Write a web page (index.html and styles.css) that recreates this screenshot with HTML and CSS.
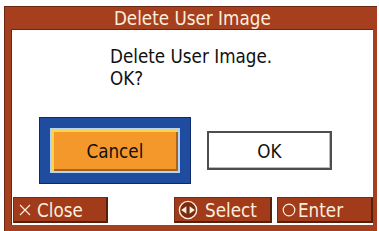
FILE: index.html
```html
<!DOCTYPE html>
<html lang="en">
  <head>
    <meta charset="UTF-8" />
    <meta name="viewport" content="width=device-width, initial-scale=1.0" />
    <title>Delete User Image</title>
    <link rel="stylesheet" href="styles.css">
  </head>
  <body>
    <!-- Delete dialog -->
    <section class="dialog">
      <div class="dialog-title"><span class="txt">Delete User Image</span></div>

      <div class="dialog-body">
        <div class="message">
          <span class="txt">Delete User Image.</span><br />
          <span class="txt">OK?</span>
        </div>

        <div class="choices">
          <div class="focus-box">
            <div class="btn btn-cancel"><span class="txt">Cancel</span></div>
          </div>
          <div class="btn btn-ok"><span class="txt">OK</span></div>
        </div>

        <!-- bottom function buttons -->
        <div class="func-bar">
          <div class="func func-close">
            <svg class="icon-x" viewBox="0 0 12 12">
              <path d="M1 1 L11 11 M11 1 L1 11" />
            </svg>
            <span class="txt">Close</span>
          </div>
          <div class="func func-select">
            <svg class="icon-dial" viewBox="0 0 20 20">
              <circle cx="10" cy="10" r="8.6" />
              <polygon points="3.2,10 8.4,6.2 8.4,13.8" />
              <polygon points="16.8,10 11.6,6.2 11.6,13.8" />
            </svg>
            <span class="txt">Select</span>
          </div>
          <div class="func func-enter">
            <svg class="icon-ring" viewBox="0 0 14 14">
              <circle cx="7" cy="7" r="5.8" />
            </svg>
            <span class="txt">Enter</span>
          </div>
        </div>
      </div>
    </section>
  </body>
</html>
```

FILE: styles.css
```css
:root {
  --frame: #a53f1d;
  --frame-dark: #6a2711;
  --cream: #fdeedd;
  --blue: #1f4c9e;
  --orange: #f5982b;
}

* {
  margin: 0;
  padding: 0;
  box-sizing: border-box;
}

body {
  background: #ffffff;
  font-family: "DejaVu Sans", "Liberation Sans", sans-serif;
  font-size: 20px;
  overflow: hidden;
}

/* narrow, tall lettering like the panel's bitmap font */
.txt {
  display: inline-block;
  transform: scaleX(0.84);
  white-space: nowrap;
}

/* outer frame */
.dialog {
  margin: 6px 0 0 4px;
  width: 373px;
  height: 225px;
  background: var(--frame);
  border-top: 1px solid var(--frame-dark);
  border-left: 1px solid var(--frame-dark);
  padding: 0 4px 0 6px;
}

.dialog-title {
  height: 22px;
  line-height: 22px;
  text-align: center;
  color: var(--cream);
}

.dialog-body {
  background: #ffffff;
  height: 196px;
  border-top: 1px solid var(--frame-dark);
  border-left: 1px solid var(--frame-dark);
  display: flex;
  flex-direction: column;
}

.message {
  padding: 15px 0 0 98px;
  line-height: 22px;
  color: #111;
}

.message .txt {
  transform-origin: left center;
}

.choices {
  display: flex;
  align-items: center;
  gap: 16px;
  margin-top: 28px;
  padding-left: 27px;
}

.focus-box {
  width: 152px;
  height: 67px;
  background: var(--blue);
  border: 1px solid #0d2b6c;
  padding: 10px;
}

.btn {
  display: flex;
  align-items: center;
  justify-content: center;
  color: #111;
}

.btn-cancel {
  height: 45px;
  background: var(--orange);
  border: 2px solid #b5d3f2;
  box-shadow: inset 2px 2px 0 #ffd24a, inset -2px -2px 0 #a8641f;
}

.btn-ok {
  width: 125px;
  height: 39px;
  border: 2px solid #4e4e4e;
  box-shadow: inset -1px -1px 0 #bbbbbb;
}

/* function buttons */
.func-bar {
  margin-top: auto;
  display: flex;
  gap: 5px;
  padding: 0 0 2px 1px;
}

.func {
  height: 26px;
  background: #a13b19;
  border: 1px solid #7a2c12;
  border-right: 2px solid #55200c;
  border-bottom: 2px solid #55200c;
  color: var(--cream);
  display: flex;
  align-items: center;
}

.func .txt {
  transform-origin: left center;
}

.func-close {
  width: 95px;
  padding-left: 5px;
  gap: 6px;
}

.func-select {
  width: 98px;
  margin-left: auto;
  padding-left: 3px;
  gap: 7px;
}

.func-enter {
  width: 96px;
  padding-left: 4px;
  gap: 2px;
}

.icon-x {
  width: 12px;
  height: 12px;
  stroke: var(--cream);
  stroke-width: 1.2;
  fill: none;
}

.icon-dial {
  width: 20px;
  height: 20px;
}

.icon-dial circle {
  fill: #7a2a10;
  stroke: var(--cream);
  stroke-width: 1.4;
}

.icon-dial polygon {
  fill: var(--cream);
}

.icon-ring {
  width: 14px;
  height: 14px;
  fill: none;
  stroke: var(--cream);
  stroke-width: 1.2;
}
```
